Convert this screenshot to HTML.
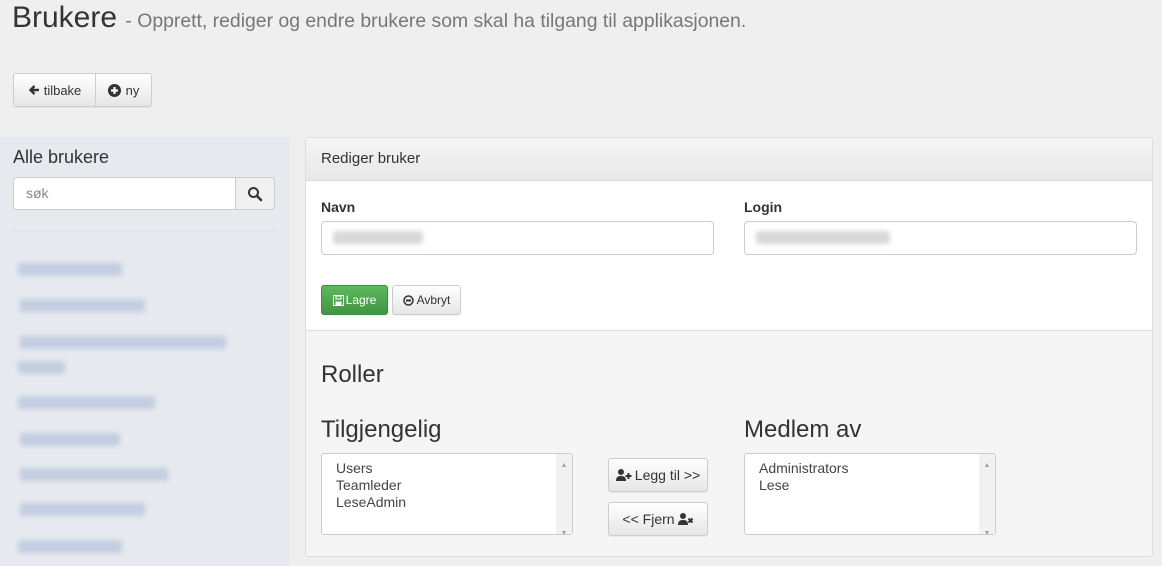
<!DOCTYPE html><html><head><style>
*{box-sizing:border-box}body{margin:0;width:1162px;height:566px;overflow:hidden;background:#efefef;font-family:"Liberation Sans",sans-serif;color:#333;position:relative}
.a{position:absolute}
.btn{position:absolute;border:1px solid #ccc;border-radius:3px;background:linear-gradient(#fff,#e6e6e6);font-size:13px;display:flex;align-items:center;justify-content:center;box-shadow:0 1px 1px rgba(0,0,0,.05)}
.bar{position:absolute;background:#c3cee0;filter:blur(2.5px);height:13px;border-radius:3px}
.inp{position:absolute;background:#fff;border:1px solid #ccc;border-radius:4px}
.lb{position:absolute;background:#fff;border:1px solid #ccc;border-radius:3px;font-size:14px;color:#444;padding:6px 0 0 14px;line-height:17px}
.sb{position:absolute;right:0;top:0;bottom:0;width:16px;background:#f1f1f1;font-size:7px;color:#a3a3a3;text-align:center}
</style></head><body>
<div class="a" style="left:12px;top:1px;font-size:30px">Brukere <span style="font-size:19.4px;color:#777">- Opprett, rediger og endre brukere som skal ha tilgang til applikasjonen.</span></div>
<div class="btn" style="left:13px;top:73px;width:83px;height:34px;border-radius:3px 0 0 3px"><svg width="12" height="12" viewBox="0 0 12 12" style="margin-right:4px"><path d="M11 6H3M6.5 2L2.5 6l4 4" fill="none" stroke="#333" stroke-width="2.4"/></svg>tilbake</div>
<div class="btn" style="left:95px;top:73px;width:57px;height:34px;border-radius:0 3px 3px 0"><svg width="13" height="13" viewBox="0 0 13 13" style="margin-right:5px"><circle cx="6.5" cy="6.5" r="6.5" fill="#333"/><path d="M6.5 3v7M3 6.5h7" stroke="#fff" stroke-width="2.2"/></svg>ny</div>
<div class="a" style="left:0;top:137px;width:290px;height:429px;background:#e6e9ee"></div>
<div class="a" style="left:13px;top:147px;font-size:18px">Alle brukere</div>
<div class="inp" style="left:13px;top:177px;width:262px;height:33px;border-radius:4px"></div>
<div class="a" style="left:26px;top:185px;font-size:14px;color:#888">søk</div>
<div class="a" style="left:235px;top:177px;width:40px;height:33px;border:1px solid #ccc;border-radius:0 4px 4px 0;background:#f0f0f0"></div>
<svg class="a" style="left:247px;top:186px" width="16" height="16" viewBox="0 0 16 16"><circle cx="6.5" cy="6.5" r="4.5" fill="none" stroke="#333" stroke-width="2"/><path d="M10 10l4 4" stroke="#333" stroke-width="2.5" stroke-linecap="round"/></svg>
<div class="a" style="left:13px;top:230px;width:262px;height:1px;background:#dde1e7"></div>
<div class="bar" style="left:18px;top:263px;width:104px"></div>
<div class="bar" style="left:20px;top:299px;width:125px"></div>
<div class="bar" style="left:20px;top:336px;width:206px"></div>
<div class="bar" style="left:18px;top:361px;width:47px"></div>
<div class="bar" style="left:18px;top:396px;width:137px"></div>
<div class="bar" style="left:20px;top:433px;width:100px"></div>
<div class="bar" style="left:20px;top:468px;width:148px"></div>
<div class="bar" style="left:20px;top:503px;width:125px"></div>
<div class="bar" style="left:18px;top:540px;width:104px"></div>
<div class="a" style="left:305px;top:137px;width:848px;height:420px;border:1px solid #ddd;border-radius:3px;background:#f5f5f5;overflow:hidden">
<div style="height:43px;background:linear-gradient(#f5f5f5,#e8e8e8);border-bottom:1px solid #ddd;padding:12px 0 0 15px;font-size:15px">Rediger bruker</div>
<div style="height:150px;background:#fff;border-bottom:1px solid #ddd"></div>
</div>
<div class="a" style="left:321px;top:199px;font-size:14px;font-weight:bold">Navn</div>
<div class="a" style="left:744px;top:199px;font-size:14px;font-weight:bold">Login</div>
<div class="inp" style="left:321px;top:221px;width:393px;height:34px"></div>
<div class="inp" style="left:744px;top:221px;width:393px;height:34px"></div>
<div class="bar" style="left:333px;top:231px;width:90px;background:#d8d8d8"></div>
<div class="bar" style="left:756px;top:231px;width:134px;background:#d8d8d8"></div>
<div class="btn" style="left:321px;top:285px;width:67px;height:30px;background:linear-gradient(#5cb85c,#419641);border-color:#3e8f3e;color:#fff;font-size:12px"><svg width="11" height="11" viewBox="0 0 11 11" style="margin-right:2px"><rect x=".5" y=".5" width="10" height="10" fill="none" stroke="#fff"/><rect x="3" y="1" width="5" height="3" fill="none" stroke="#fff"/><rect x="2.5" y="6.5" width="6" height="4" fill="#fff"/></svg>Lagre</div>
<div class="btn" style="left:392px;top:285px;width:69px;height:30px;font-size:12px"><svg width="11" height="11" viewBox="0 0 11 11" style="margin-right:3px"><circle cx="5.5" cy="5.5" r="4.5" fill="none" stroke="#333" stroke-width="1.5"/><path d="M3 5.5h5" stroke="#333" stroke-width="2"/></svg>Avbryt</div>
<div class="a" style="left:321px;top:361px;font-size:24px">Roller</div>
<div class="a" style="left:321px;top:416px;font-size:24px">Tilgjengelig</div>
<div class="a" style="left:744px;top:416px;font-size:24px">Medlem av</div>
<div class="lb" style="left:321px;top:453px;width:252px;height:82px">Users<br>Teamleder<br>LeseAdmin<div class="sb"><div style="margin-top:3px">▲</div><div style="margin-top:51px">▼</div></div></div>
<div class="lb" style="left:744px;top:453px;width:252px;height:82px">Administrators<br>Lese<div class="sb"><div style="margin-top:3px">▲</div><div style="margin-top:51px">▼</div></div></div>
<div class="btn" style="left:608px;top:458px;width:100px;height:34px;font-size:14px"><svg width="16" height="12" viewBox="0 0 16 12" style="margin-right:3px"><circle cx="5" cy="3" r="3" fill="#333"/><path d="M0 12c0-4 2-5 5-5s5 1 5 5z" fill="#333"/><path d="M12.5 4v6M9.5 7h6" stroke="#333" stroke-width="2"/></svg>Legg til &gt;&gt;</div>
<div class="btn" style="left:608px;top:502px;width:100px;height:34px;font-size:14px">&lt;&lt; Fjern <svg width="16" height="12" viewBox="0 0 16 12" style="margin-left:3px"><circle cx="5" cy="3" r="3" fill="#333"/><path d="M0 12c0-4 2-5 5-5s5 1 5 5z" fill="#333"/><path d="M10.5 5.5l4 4M14.5 5.5l-4 4" stroke="#333" stroke-width="2"/></svg></div>
</body></html>
